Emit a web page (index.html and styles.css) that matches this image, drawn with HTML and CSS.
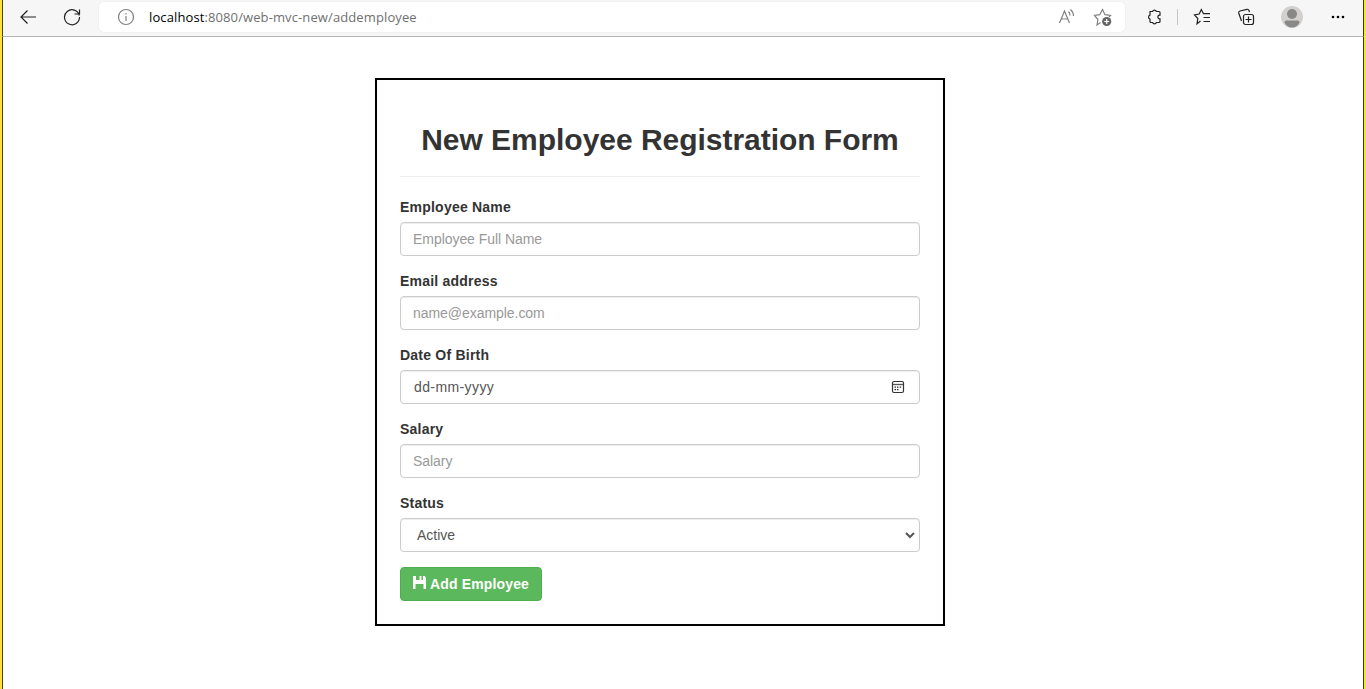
FILE: index.html
```html
<!DOCTYPE html>
<html lang="en">
<head>
<meta charset="utf-8">
<title>New Employee Registration Form</title>
<link rel="stylesheet" href="styles.css">
</head>
<body>
<div class="window">
  <header class="toolbar">
    <svg class="icon back" width="18" height="18" viewBox="0 0 18 18"><path d="M17 9H2M8.500 2.500L2 9l6.500 6.500"/></svg>
    <svg class="icon reload" width="18" height="18" viewBox="0 0 18 18"><path d="M16.300 7.500A7.500 7.500 0 1 0 16.500 9M16.500 1.500V6h-5"/></svg>
    <div class="address">
      <svg class="icon muted info" width="18" height="18" viewBox="0 0 18 18"><circle cx="9" cy="9" r="7.500"/><path d="M9 8v5M9 5v1.500"/></svg>
      <div class="url"><span class="host">localhost</span>:8080/web-mvc-new/addemployee</div>
      <svg class="icon muted read" width="18" height="18" viewBox="0 0 18 18"><path d="M1.500 15L6.500 3l5 12M3.300 11h6.400M10.500 3.500q1.500 1.500 1.500 4M12.500 1.500q3 2.500 3 6.500"/></svg>
      <svg class="icon muted fav" width="20" height="20" viewBox="0 0 20 20"><path d="M7.500 14.500L4 17l.9-5.500L1.500 7.500l5.200-.8L9.500 1.500l2.500 5.200 5.500.8-1.500 1.600"/><circle class="dot" cx="13.700" cy="13.500" r="4.600"/><path class="plus" d="M13.700 11v5M11.200 13.500h5"/></svg>
    </div>
    <svg class="icon ext" width="18" height="18" viewBox="0 0 18 18"><path d="M5 3.500h2.600a2 2 0 0 1 3.800 0H14a1 1 0 0 1 1 1v2.700h-.7a1.900 1.900 0 0 0 0 3.700h.7v2.600a1 1 0 0 1-1 1h-2.600a2 2 0 0 1-3.800 0H6a1 1 0 0 1-1-1v-2.400a2.100 2.100 0 0 1 0-4z"/></svg>
    <span class="divider"></span>
    <svg class="icon favs" width="18" height="18" viewBox="0 0 18 18"><path d="M7.500 13L4 15.800l.8-5.300L1.500 6.800l4.700-.8L8.300 1.500l2.200 4.200H17M10.500 9.500H17M10.500 13.500H17"/></svg>
    <svg class="icon coll" width="18" height="18" viewBox="0 0 18 18"><rect x="6.500" y="6.500" width="10" height="10" rx="2"/><path d="M11.500 8.500v6M8.500 11.500h6M4.500 13L1.700 5Q1.300 3.500 3 3l7-1.700q1.500-.3 2 1.200l.5 1.700"/></svg>
    <svg class="avatar" width="22" height="22" viewBox="0 0 22 22"><circle cx="11" cy="11" r="11" fill="#d2d0ce"/><circle cx="11" cy="8" r="5" fill="#8a8886"/><path d="M3.500 16.500q0-2 2-2h11q2 0 2 2-2.500 5-7.500 5t-7.500-5z" fill="#8a8886"/></svg>
    <svg class="more" width="16" height="4" viewBox="0 0 16 4"><circle cx="3" cy="2" r="1.300"/><circle cx="8" cy="2" r="1.300"/><circle cx="13" cy="2" r="1.300"/></svg>
  </header>
  <main class="page">
    <form class="card">
      <h1 class="title"><span>New Employee Registration Form</span></h1>
      <div class="group"><label class="label">Employee Name</label><div class="control placeholder"><span>Employee Full Name</span></div></div>
      <div class="group"><label class="label">Email address</label><div class="control placeholder"><span>name@example.com</span></div></div>
      <div class="group"><label class="label">Date Of Birth</label><div class="control date"><span class="t-date">dd-mm-yyyy</span>
        <svg width="14" height="14" viewBox="0 0 14 14"><rect x="1.500" y="1.500" width="11" height="11" rx="1.500" fill="none" stroke="#333" stroke-width="1.200"/><path d="M2 4.500h10" stroke="#555" stroke-width="1.300"/><path d="M6 7.200h1.500M8.700 7.200h1.500M3.500 7.200H5M3.500 9.700H5M6 9.700h1.500" stroke="#333" stroke-width="1.300"/></svg></div></div>
      <div class="group"><label class="label">Salary</label><div class="control placeholder"><span>Salary</span></div></div>
      <div class="group"><label class="label">Status</label><div class="control select"><span>Active</span>
        <svg width="10" height="7" viewBox="0 0 10 7"><path d="M1 1l4 4 4-4" fill="none" stroke="#555" stroke-width="2"/></svg></div></div>
      <button type="button" class="submit"><svg class="disk" width="13" height="13" viewBox="0 0 13 13"><path fill="#fff" d="M0 0h3v4h3.500V0h2v4H10V0h1.500L13 1.500V13h-2.500V8h-8v5H0z"/></svg><span>Add Employee</span></button>
    </form>
  </main>
</div>
</body>
</html>
```
FILE: styles.css
```css
* { box-sizing: border-box; }
body { margin: 0; background: #fff; font-family: "Liberation Sans", Arial, sans-serif; font-size: 14px; color: #333; }
.window { height: 689px; border-left: 2px solid #ffe234; border-right: 2px solid #f2e933; overflow: hidden; display: flex; flex-direction: column; }
.toolbar { height: 37px; flex: none; display: flex; align-items: flex-start; padding: 0 0 0 17px; background: #f6f6f6; border-bottom: 1px solid #b4b4b4; border-left: 1px solid #4a431c; border-right: 1px solid #3b3918; }
.icon { flex: none; fill: none; stroke: #222; stroke-width: 1.200; margin-top: 8px; }
.muted { stroke: #808080; }
.back { margin-left: -1px; }
.reload { margin-left: 26px; }
.address { width: 1026px; height: 30px; margin: 2px 0 0 18px; padding-left: 18px; background: #fff; border-radius: 5px; display: flex; box-shadow: 0 0 2px #e4e4e4; flex: none; }
.address .icon { margin-top: 6px; }
.url { font: 13px/18px "Open Sans", "Noto Sans", sans-serif; color: #707070; margin: 6px 0 0 14px; width: 900px; white-space: nowrap; letter-spacing: .11px; }
.host { color: #000; }
.read { margin-left: 9px; }
.fav { margin-left: 17px; }
.dot { fill: #666; stroke: none; }
.plus { stroke: #fff; stroke-width: 1.200; }
.ext { margin-left: 20px; }
.divider { width: 1px; height: 16px; background: #c6c6c6; margin: 9px 0 0 14px; }
.favs { margin-left: 15px; }
.coll { margin-left: 26px; }
.avatar { margin: 6px 0 0 26px; }
.more { margin: 15px 0 0 27px; }
.page { flex: 1; border-left: 1px solid #4a431c; border-right: 1px solid #3b3918; display: flex; align-items: flex-start; padding: 41px 0 0 372px; }
.card { width: 570px; height: 548px; border: 2px solid #000; padding: 40px 23px 23px; display: flex; flex-direction: column; align-items: stretch; }
.title { height: 57px; margin: 0 0 20px; border-bottom: 1px solid #eee; font-size: 30px; line-height: 39px; font-weight: 700; text-align: center; white-space: nowrap; letter-spacing: -.03px; }
.group { height: 74px; flex: none; }
.label { display: block; width: max-content; height: 25px; font-weight: 700; line-height: 20px; letter-spacing: .22px; }
.control { height: 34px; border: 1px solid #ccc; border-radius: 4px; padding: 0 12px; line-height: 32px; color: #555; display: flex; align-items: center; box-shadow: inset 0 1px 1px rgba(0,0,0,.075); }
.placeholder { color: #999; letter-spacing: -.05px; }
.date { justify-content: space-between; padding: 0 14px 0 13px; }
.t-date { letter-spacing: .4px; }
.select { justify-content: space-between; padding: 0 4px 0 16px; }
.submit { width: 142px; height: 34px; flex: none; border: 1px solid #4cae4c; border-radius: 4px; background: #5cb85c; color: #fff; font: 700 14px/20px "Liberation Sans", Arial, sans-serif; padding: 0 0 0 12px; display: flex; align-items: center; gap: 4px; white-space: nowrap; letter-spacing: .15px; }
.disk { margin-top: -3px; }
```
